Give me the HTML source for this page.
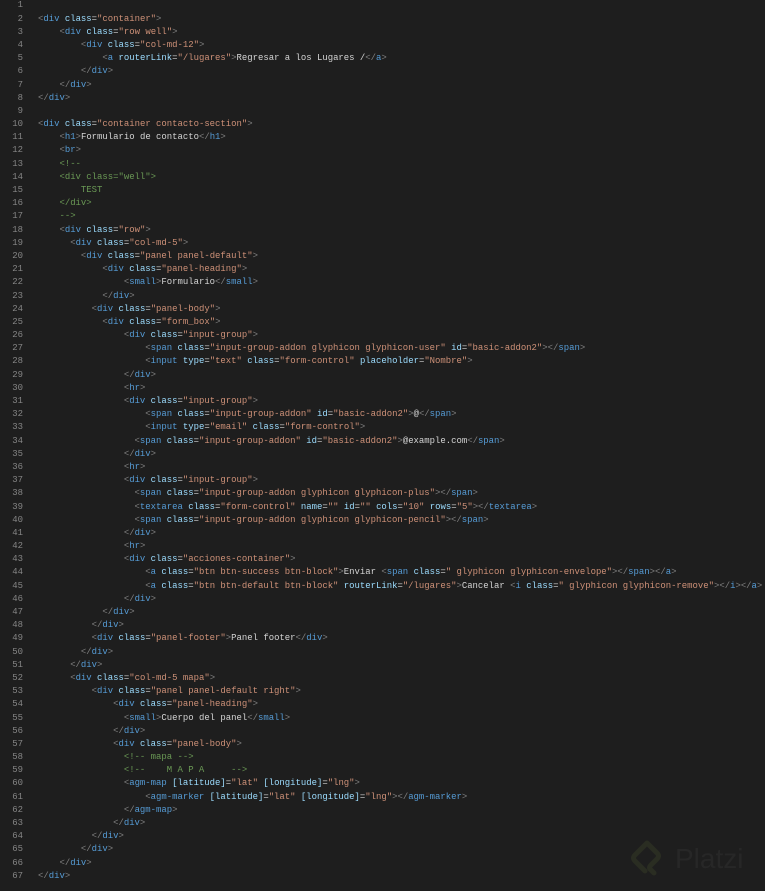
<!DOCTYPE html>
<html><head><meta charset="utf-8"><style>
html,body{margin:0;padding:0;background:#1e1e1e;width:765px;height:891px;overflow:hidden}
#ed{position:absolute;left:0;top:-0.6px;font-family:"Liberation Mono",monospace;font-size:8.95px;line-height:13.2px;color:#d4d4d4}
.l{position:relative;height:13.2px;white-space:pre;padding-left:38px}
.n{position:absolute;left:0;width:23px;text-align:right;color:#858585}
g{color:#808080}t{color:#569cd6}k{color:#9cdcfe}v{color:#ce9178}c{color:#6a9955}
#logo{position:absolute;left:675px;top:843px;color:#272727;font-family:"Liberation Sans",sans-serif;font-size:28px;line-height:32px}
</style></head><body>
<div id="ed">
<div class="l"><span class="n">1</span></div>
<div class="l"><span class="n">2</span><g>&lt;</g><t>div</t> <k>class</k>=<v>"container"</v><g>&gt;</g></div>
<div class="l"><span class="n">3</span>    <g>&lt;</g><t>div</t> <k>class</k>=<v>"row well"</v><g>&gt;</g></div>
<div class="l"><span class="n">4</span>        <g>&lt;</g><t>div</t> <k>class</k>=<v>"col-md-12"</v><g>&gt;</g></div>
<div class="l"><span class="n">5</span>            <g>&lt;</g><t>a</t> <k>routerLink</k>=<v>"/lugares"</v><g>&gt;</g>Regresar a los Lugares /<g>&lt;/</g><t>a</t><g>&gt;</g></div>
<div class="l"><span class="n">6</span>        <g>&lt;/</g><t>div</t><g>&gt;</g></div>
<div class="l"><span class="n">7</span>    <g>&lt;/</g><t>div</t><g>&gt;</g></div>
<div class="l"><span class="n">8</span><g>&lt;/</g><t>div</t><g>&gt;</g></div>
<div class="l"><span class="n">9</span></div>
<div class="l"><span class="n">10</span><g>&lt;</g><t>div</t> <k>class</k>=<v>"container contacto-section"</v><g>&gt;</g></div>
<div class="l"><span class="n">11</span>    <g>&lt;</g><t>h1</t><g>&gt;</g>Formulario de contacto<g>&lt;/</g><t>h1</t><g>&gt;</g></div>
<div class="l"><span class="n">12</span>    <g>&lt;</g><t>br</t><g>&gt;</g></div>
<div class="l"><span class="n">13</span>    <c>&lt;!--</c></div>
<div class="l"><span class="n">14</span>    <c>&lt;div class="well"&gt;</c></div>
<div class="l"><span class="n">15</span>        <c>TEST</c></div>
<div class="l"><span class="n">16</span>    <c>&lt;/div&gt;</c></div>
<div class="l"><span class="n">17</span>    <c>--&gt;</c></div>
<div class="l"><span class="n">18</span>    <g>&lt;</g><t>div</t> <k>class</k>=<v>"row"</v><g>&gt;</g></div>
<div class="l"><span class="n">19</span>      <g>&lt;</g><t>div</t> <k>class</k>=<v>"col-md-5"</v><g>&gt;</g></div>
<div class="l"><span class="n">20</span>        <g>&lt;</g><t>div</t> <k>class</k>=<v>"panel panel-default"</v><g>&gt;</g></div>
<div class="l"><span class="n">21</span>            <g>&lt;</g><t>div</t> <k>class</k>=<v>"panel-heading"</v><g>&gt;</g></div>
<div class="l"><span class="n">22</span>                <g>&lt;</g><t>small</t><g>&gt;</g>Formulario<g>&lt;/</g><t>small</t><g>&gt;</g></div>
<div class="l"><span class="n">23</span>            <g>&lt;/</g><t>div</t><g>&gt;</g></div>
<div class="l"><span class="n">24</span>          <g>&lt;</g><t>div</t> <k>class</k>=<v>"panel-body"</v><g>&gt;</g></div>
<div class="l"><span class="n">25</span>            <g>&lt;</g><t>div</t> <k>class</k>=<v>"form_box"</v><g>&gt;</g></div>
<div class="l"><span class="n">26</span>                <g>&lt;</g><t>div</t> <k>class</k>=<v>"input-group"</v><g>&gt;</g></div>
<div class="l"><span class="n">27</span>                    <g>&lt;</g><t>span</t> <k>class</k>=<v>"input-group-addon glyphicon glyphicon-user"</v> <k>id</k>=<v>"basic-addon2"</v><g>&gt;&lt;/</g><t>span</t><g>&gt;</g></div>
<div class="l"><span class="n">28</span>                    <g>&lt;</g><t>input</t> <k>type</k>=<v>"text"</v> <k>class</k>=<v>"form-control"</v> <k>placeholder</k>=<v>"Nombre"</v><g>&gt;</g></div>
<div class="l"><span class="n">29</span>                <g>&lt;/</g><t>div</t><g>&gt;</g></div>
<div class="l"><span class="n">30</span>                <g>&lt;</g><t>hr</t><g>&gt;</g></div>
<div class="l"><span class="n">31</span>                <g>&lt;</g><t>div</t> <k>class</k>=<v>"input-group"</v><g>&gt;</g></div>
<div class="l"><span class="n">32</span>                    <g>&lt;</g><t>span</t> <k>class</k>=<v>"input-group-addon"</v> <k>id</k>=<v>"basic-addon2"</v><g>&gt;</g>@<g>&lt;/</g><t>span</t><g>&gt;</g></div>
<div class="l"><span class="n">33</span>                    <g>&lt;</g><t>input</t> <k>type</k>=<v>"email"</v> <k>class</k>=<v>"form-control"</v><g>&gt;</g></div>
<div class="l"><span class="n">34</span>                  <g>&lt;</g><t>span</t> <k>class</k>=<v>"input-group-addon"</v> <k>id</k>=<v>"basic-addon2"</v><g>&gt;</g>@example.com<g>&lt;/</g><t>span</t><g>&gt;</g></div>
<div class="l"><span class="n">35</span>                <g>&lt;/</g><t>div</t><g>&gt;</g></div>
<div class="l"><span class="n">36</span>                <g>&lt;</g><t>hr</t><g>&gt;</g></div>
<div class="l"><span class="n">37</span>                <g>&lt;</g><t>div</t> <k>class</k>=<v>"input-group"</v><g>&gt;</g></div>
<div class="l"><span class="n">38</span>                  <g>&lt;</g><t>span</t> <k>class</k>=<v>"input-group-addon glyphicon glyphicon-plus"</v><g>&gt;&lt;/</g><t>span</t><g>&gt;</g></div>
<div class="l"><span class="n">39</span>                  <g>&lt;</g><t>textarea</t> <k>class</k>=<v>"form-control"</v> <k>name</k>=<v>""</v> <k>id</k>=<v>""</v> <k>cols</k>=<v>"10"</v> <k>rows</k>=<v>"5"</v><g>&gt;&lt;/</g><t>textarea</t><g>&gt;</g></div>
<div class="l"><span class="n">40</span>                  <g>&lt;</g><t>span</t> <k>class</k>=<v>"input-group-addon glyphicon glyphicon-pencil"</v><g>&gt;&lt;/</g><t>span</t><g>&gt;</g></div>
<div class="l"><span class="n">41</span>                <g>&lt;/</g><t>div</t><g>&gt;</g></div>
<div class="l"><span class="n">42</span>                <g>&lt;</g><t>hr</t><g>&gt;</g></div>
<div class="l"><span class="n">43</span>                <g>&lt;</g><t>div</t> <k>class</k>=<v>"acciones-container"</v><g>&gt;</g></div>
<div class="l"><span class="n">44</span>                    <g>&lt;</g><t>a</t> <k>class</k>=<v>"btn btn-success btn-block"</v><g>&gt;</g>Enviar <g>&lt;</g><t>span</t> <k>class</k>=<v>" glyphicon glyphicon-envelope"</v><g>&gt;&lt;/</g><t>span</t><g>&gt;&lt;/</g><t>a</t><g>&gt;</g></div>
<div class="l"><span class="n">45</span>                    <g>&lt;</g><t>a</t> <k>class</k>=<v>"btn btn-default btn-block"</v> <k>routerLink</k>=<v>"/lugares"</v><g>&gt;</g>Cancelar <g>&lt;</g><t>i</t> <k>class</k>=<v>" glyphicon glyphicon-remove"</v><g>&gt;&lt;/</g><t>i</t><g>&gt;&lt;/</g><t>a</t><g>&gt;</g></div>
<div class="l"><span class="n">46</span>                <g>&lt;/</g><t>div</t><g>&gt;</g></div>
<div class="l"><span class="n">47</span>            <g>&lt;/</g><t>div</t><g>&gt;</g></div>
<div class="l"><span class="n">48</span>          <g>&lt;/</g><t>div</t><g>&gt;</g></div>
<div class="l"><span class="n">49</span>          <g>&lt;</g><t>div</t> <k>class</k>=<v>"panel-footer"</v><g>&gt;</g>Panel footer<g>&lt;/</g><t>div</t><g>&gt;</g></div>
<div class="l"><span class="n">50</span>        <g>&lt;/</g><t>div</t><g>&gt;</g></div>
<div class="l"><span class="n">51</span>      <g>&lt;/</g><t>div</t><g>&gt;</g></div>
<div class="l"><span class="n">52</span>      <g>&lt;</g><t>div</t> <k>class</k>=<v>"col-md-5 mapa"</v><g>&gt;</g></div>
<div class="l"><span class="n">53</span>          <g>&lt;</g><t>div</t> <k>class</k>=<v>"panel panel-default right"</v><g>&gt;</g></div>
<div class="l"><span class="n">54</span>              <g>&lt;</g><t>div</t> <k>class</k>=<v>"panel-heading"</v><g>&gt;</g></div>
<div class="l"><span class="n">55</span>                <g>&lt;</g><t>small</t><g>&gt;</g>Cuerpo del panel<g>&lt;/</g><t>small</t><g>&gt;</g></div>
<div class="l"><span class="n">56</span>              <g>&lt;/</g><t>div</t><g>&gt;</g></div>
<div class="l"><span class="n">57</span>              <g>&lt;</g><t>div</t> <k>class</k>=<v>"panel-body"</v><g>&gt;</g></div>
<div class="l"><span class="n">58</span>                <c>&lt;!-- mapa --&gt;</c></div>
<div class="l"><span class="n">59</span>                <c>&lt;!--    M A P A     --&gt;</c></div>
<div class="l"><span class="n">60</span>                <g>&lt;</g><t>agm-map</t> <k>[latitude]</k>=<v>"lat"</v> <k>[longitude]</k>=<v>"lng"</v><g>&gt;</g></div>
<div class="l"><span class="n">61</span>                    <g>&lt;</g><t>agm-marker</t> <k>[latitude]</k>=<v>"lat"</v> <k>[longitude]</k>=<v>"lng"</v><g>&gt;&lt;/</g><t>agm-marker</t><g>&gt;</g></div>
<div class="l"><span class="n">62</span>                <g>&lt;/</g><t>agm-map</t><g>&gt;</g></div>
<div class="l"><span class="n">63</span>              <g>&lt;/</g><t>div</t><g>&gt;</g></div>
<div class="l"><span class="n">64</span>          <g>&lt;/</g><t>div</t><g>&gt;</g></div>
<div class="l"><span class="n">65</span>        <g>&lt;/</g><t>div</t><g>&gt;</g></div>
<div class="l"><span class="n">66</span>    <g>&lt;/</g><t>div</t><g>&gt;</g></div>
<div class="l"><span class="n">67</span><g>&lt;/</g><t>div</t><g>&gt;</g></div>
</div>
<svg style="position:absolute;left:630px;top:840px" width="36" height="38" viewBox="0 0 36 38"><path d="M17 3 L5 15 Q2 18 5 21 L15 31 M17 3 L27 13 Q30 16 27 19 L21 25 Q18 28 21 30 L24 33" fill="none" stroke="#2a2d22" stroke-width="5" stroke-linecap="round" stroke-linejoin="round"/></svg>
<div id="logo">Platzi</div>
</body></html>
